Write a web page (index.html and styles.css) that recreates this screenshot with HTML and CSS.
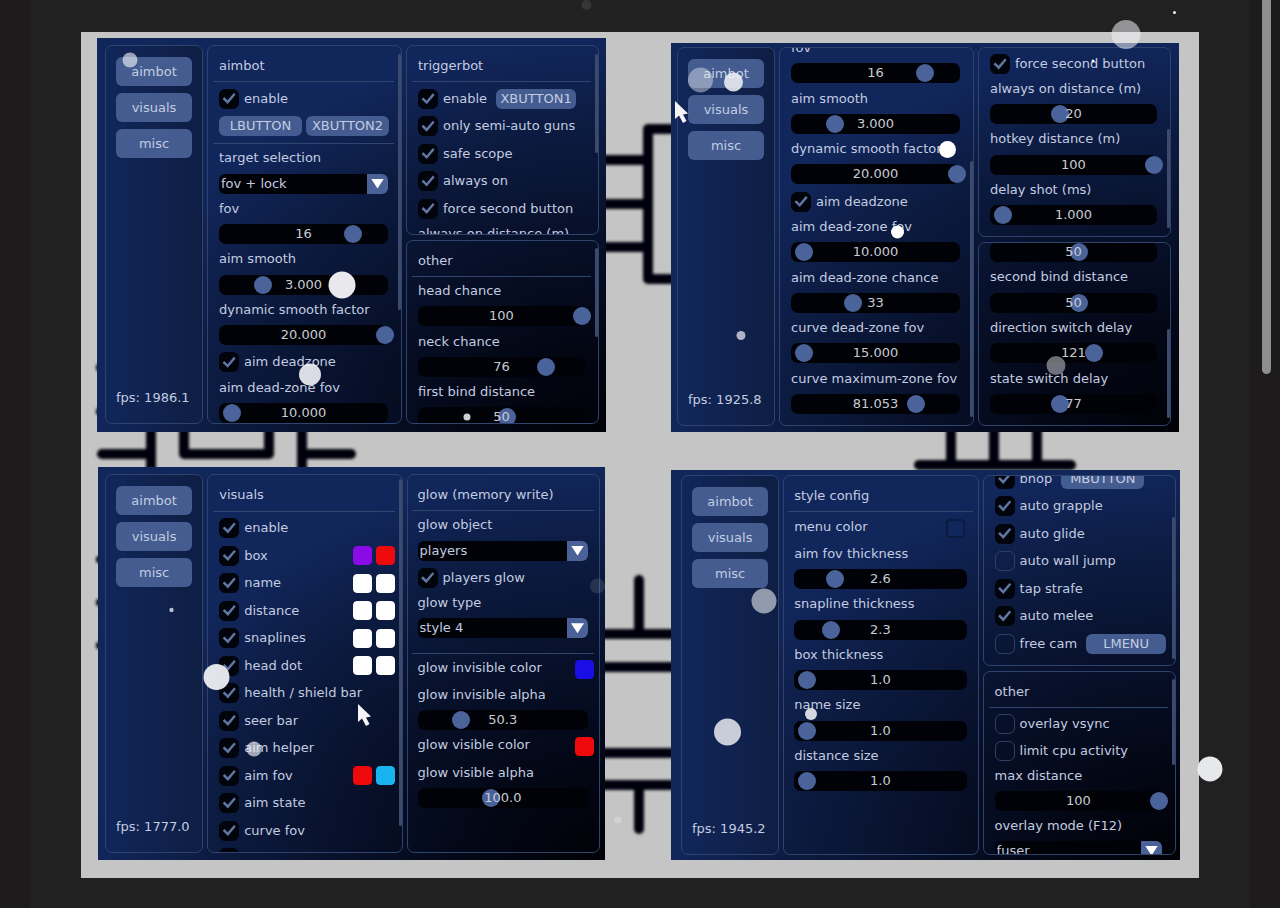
FILE: index.html
```html
<!DOCTYPE html>
<html lang="en">
<head>
<meta charset="utf-8">
<title>Menu gallery</title>
<link rel="stylesheet" href="styles.css">
</head>
<body>
<div class="sheet">
<main class="canvas">
  <svg class="traces" viewBox="81 32 1118 846" preserveAspectRatio="none" aria-hidden="true">
    <defs><filter id="soft" x="-5%" y="-5%" width="110%" height="110%"><feGaussianBlur stdDeviation="1.4"/></filter></defs>
    <g fill="none" stroke="#050507" stroke-width="10" stroke-linecap="round" stroke-linejoin="round" filter="url(#soft)">
      <path d="M600 160H648M600 204H648M600 247H648M680 129H648V279H680"/>
      <path d="M102 454H151M151 425V475M184 425V454H269V425M302 425V475M302 454H351"/>
      <path d="M951 425V465M994 425V465M1037 425V465M919 465H1071"/>
      <path d="M639 580V634M600 634H680M600 667H680M600 753H680M600 785H680M639 785V829"/>
      <path stroke-width="6" d="M99 367V368M99 411V412M99 559V560M99 602V603M99 645V646"/>
    </g>
  </svg>

  <section class="window w1">
    <nav class="panel side">
      <button>aimbot</button><button>visuals</button><button>misc</button>
      <p>fps: 1986.1</p>
    </nav>
    <div class="panel scrolls">
      <div class="stack s-aimbot">
        <h2>aimbot</h2><hr>
        <label class="check"><input type="checkbox" checked>enable</label>
        <div class="keys"><button class="key">LBUTTON</button><button class="key">XBUTTON2</button></div>
        <hr>
        <label class="field"><span>target selection</span><span class="drop"><select><option>fov + lock</option></select></span></label>
        <label class="field"><span>fov</span><span class="slider"><input type="range" value="79"><output>16</output></span></label>
        <label class="field"><span>aim smooth</span><span class="slider"><input type="range" value="20"><output>3.000</output></span></label>
        <label class="field"><span>dynamic smooth factor</span><span class="slider"><input type="range" value="100"><output>20.000</output></span></label>
        <label class="check"><input type="checkbox" checked>aim deadzone</label>
        <label class="field"><span>aim dead-zone fov</span><span class="slider"><input type="range" value="0"><output>10.000</output></span></label>
      </div>
      <i class="bar" style="top:2%;height:68%"></i>
    </div>
    <div class="column">
      <div class="panel scrolls">
        <div class="stack s-trigger">
          <h2>triggerbot</h2><hr>
          <div class="row"><label class="check"><input type="checkbox" checked>enable</label><button class="key">XBUTTON1</button></div>
          <label class="check"><input type="checkbox" checked>only semi-auto guns</label>
          <label class="check"><input type="checkbox" checked>safe scope</label>
          <label class="check"><input type="checkbox" checked>always on</label>
          <label class="check"><input type="checkbox" checked>force second button</label>
          <span>always on distance (m)</span>
        </div>
        <i class="bar" style="top:4%;height:53%"></i>
      </div>
      <div class="panel scrolls">
        <div class="stack s-chance">
          <h2>other</h2><hr>
          <label class="field"><span>head chance</span><span class="slider"><input type="range" value="100"><output>100</output></span></label>
          <label class="field"><span>neck chance</span><span class="slider"><input type="range" value="76"><output>76</output></span></label>
          <label class="field"><span>first bind distance</span><span class="slider"><input type="range" value="50"><output>50</output></span></label>
        </div>
        <i class="bar" style="top:4%;height:49%"></i>
      </div>
    </div>
  </section>

  <section class="window w2">
    <nav class="panel side">
      <button>aimbot</button><button>visuals</button><button>misc</button>
      <p>fps: 1925.8</p>
    </nav>
    <div class="panel scrolls end">
      <div class="stack s-zones">
        <label class="field"><span>fov</span><span class="slider"><input type="range" value="79"><output>16</output></span></label>
        <label class="field"><span>aim smooth</span><span class="slider"><input type="range" value="20"><output>3.000</output></span></label>
        <label class="field"><span>dynamic smooth factor</span><span class="slider"><input type="range" value="100"><output>20.000</output></span></label>
        <label class="check"><input type="checkbox" checked>aim deadzone</label>
        <label class="field"><span>aim dead-zone fov</span><span class="slider"><input type="range" value="0"><output>10.000</output></span></label>
        <label class="field"><span>aim dead-zone chance</span><span class="slider"><input type="range" value="32"><output>33</output></span></label>
        <label class="field"><span>curve dead-zone fov</span><span class="slider"><input type="range" value="0"><output>15.000</output></span></label>
        <label class="field"><span>curve maximum-zone fov</span><span class="slider"><input type="range" value="73"><output>81.053</output></span></label>
      </div>
      <i class="bar" style="top:30%;height:68%"></i>
    </div>
    <div class="column">
      <div class="panel scrolls end">
        <div class="stack s-delay">
          <label class="check"><input type="checkbox" checked>force second button</label>
          <label class="field"><span>always on distance (m)</span><span class="slider"><input type="range" value="38"><output>20</output></span></label>
          <label class="field"><span>hotkey distance (m)</span><span class="slider"><input type="range" value="100"><output>100</output></span></label>
          <label class="field"><span>delay shot (ms)</span><span class="slider"><input type="range" value="0"><output>1.000</output></span></label>
        </div>
        <i class="bar" style="top:43%;height:53%"></i>
      </div>
      <div class="panel scrolls end">
        <div class="stack s-switch">
          <span class="slider"><input type="range" value="50" aria-label="first bind distance"><output>50</output></span>
          <label class="field"><span>second bind distance</span><span class="slider"><input type="range" value="50"><output>50</output></span></label>
          <label class="field"><span>direction switch delay</span><span class="slider"><input type="range" value="60"><output>121</output></span></label>
          <label class="field"><span>state switch delay</span><span class="slider"><input type="range" value="38"><output>77</output></span></label>
        </div>
        <i class="bar" style="top:47%;height:49%"></i>
      </div>
    </div>
  </section>

  <section class="window w3">
    <nav class="panel side">
      <button>aimbot</button><button>visuals</button><button>misc</button>
      <p>fps: 1777.0</p>
    </nav>
    <div class="panel scrolls">
      <div class="stack s-visuals">
        <h2>visuals</h2><hr>
        <label class="check"><input type="checkbox" checked>enable</label>
        <div class="row"><label class="check"><input type="checkbox" checked>box</label><span class="colors"><input type="color" value="#8a0be8" aria-label="box color"><input type="color" value="#ee0a0a" aria-label="box hidden color"></span></div>
        <div class="row"><label class="check"><input type="checkbox" checked>name</label><span class="colors"><input type="color" value="#ffffff" aria-label="name color"><input type="color" value="#ffffff" aria-label="name hidden color"></span></div>
        <div class="row"><label class="check"><input type="checkbox" checked>distance</label><span class="colors"><input type="color" value="#ffffff" aria-label="distance color"><input type="color" value="#ffffff" aria-label="distance hidden color"></span></div>
        <div class="row"><label class="check"><input type="checkbox" checked>snaplines</label><span class="colors"><input type="color" value="#ffffff" aria-label="snaplines color"><input type="color" value="#ffffff" aria-label="snaplines hidden color"></span></div>
        <div class="row"><label class="check"><input type="checkbox" checked>head dot</label><span class="colors"><input type="color" value="#ffffff" aria-label="head dot color"><input type="color" value="#ffffff" aria-label="head dot hidden color"></span></div>
        <label class="check"><input type="checkbox" checked>health / shield bar</label>
        <label class="check"><input type="checkbox" checked>seer bar</label>
        <label class="check"><input type="checkbox" checked>aim helper</label>
        <div class="row"><label class="check"><input type="checkbox" checked>aim fov</label><span class="colors"><input type="color" value="#ee0a0a" aria-label="aim fov color"><input type="color" value="#18b4f0" aria-label="aim fov second color"></span></div>
        <label class="check"><input type="checkbox" checked>aim state</label>
        <label class="check"><input type="checkbox" checked>curve fov</label>
        <span class="check"><input type="checkbox" aria-label="next option" class="filled"></span>
      </div>
      <i class="bar" style="top:1%;height:92%"></i>
    </div>
    <div class="panel">
      <div class="stack s-glow">
        <h2>glow (memory write)</h2><hr>
        <label class="field"><span>glow object</span><span class="drop"><select><option>players</option></select></span></label>
        <label class="check"><input type="checkbox" checked>players glow</label>
        <label class="field"><span>glow type</span><span class="drop"><select><option>style 4</option></select></span></label>
        <i></i><hr>
        <label class="row tint">glow invisible color<span class="colors"><input type="color" value="#1a0ee6"></span></label>
        <label class="field"><span>glow invisible alpha</span><span class="slider"><input type="range" value="20"><output>50.3</output></span></label>
        <label class="row tint">glow visible color<span class="colors"><input type="color" value="#ee0a0a"></span></label>
        <label class="field"><span>glow visible alpha</span><span class="slider"><input type="range" value="39"><output>100.0</output></span></label>
      </div>
    </div>
  </section>

  <section class="window w4">
    <nav class="panel side">
      <button>aimbot</button><button>visuals</button><button>misc</button>
      <p>fps: 1945.2</p>
    </nav>
    <div class="panel">
      <div class="stack s-style">
        <h2>style config</h2><hr>
        <label class="row tint">menu color<span class="colors inset"><input type="color" value="#11265a"></span></label>
        <label class="field"><span>aim fov thickness</span><span class="slider"><input type="range" value="18"><output>2.6</output></span></label>
        <label class="field"><span>snapline thickness</span><span class="slider"><input type="range" value="15"><output>2.3</output></span></label>
        <label class="field"><span>box thickness</span><span class="slider"><input type="range" value="0"><output>1.0</output></span></label>
        <label class="field"><span>name size</span><span class="slider"><input type="range" value="0"><output>1.0</output></span></label>
        <label class="field"><span>distance size</span><span class="slider"><input type="range" value="0"><output>1.0</output></span></label>
      </div>
    </div>
    <div class="column">
      <div class="panel scrolls end">
        <div class="stack s-moves">
          <div class="row"><label class="check"><input type="checkbox" checked>bhop</label><button class="key wide">MBUTTON</button></div>
          <label class="check"><input type="checkbox" checked>auto grapple</label>
          <label class="check"><input type="checkbox" checked>auto glide</label>
          <label class="check"><input type="checkbox">auto wall jump</label>
          <label class="check"><input type="checkbox" checked>tap strafe</label>
          <label class="check"><input type="checkbox" checked>auto melee</label>
          <div class="row"><label class="check"><input type="checkbox">free cam</label><button class="key">LMENU</button></div>
        </div>
        <i class="bar" style="top:22%;height:75%"></i>
      </div>
      <div class="panel scrolls">
        <div class="stack s-overlay">
          <h2>other</h2><hr>
          <label class="check"><input type="checkbox">overlay vsync</label>
          <label class="check"><input type="checkbox">limit cpu activity</label>
          <label class="field"><span>max distance</span><span class="slider"><input type="range" value="100"><output>100</output></span></label>
          <label class="field"><span>overlay mode (F12)</span><span class="drop"><select><option>fuser</option></select></span></label>
        </div>
        <i class="bar" style="top:4%;height:47%"></i>
      </div>
    </div>
  </section>
</main>
</div>
<i class="page-thumb"></i>
<svg class="snow" viewBox="0 0 1280 908" preserveAspectRatio="none" aria-hidden="true">
  <g fill="#f2f3f7">
    <circle cx="130" cy="60" r="7.5" opacity=".62"/>
    <circle cx="342" cy="285" r="13.5" opacity=".96"/>
    <circle cx="310" cy="374.500" r="11" opacity=".9"/>
    <circle cx="467" cy="417" r="3.500" opacity=".85"/>
    <circle cx="741" cy="335.500" r="4.500" opacity=".7"/>
    <circle cx="700.500" cy="80" r="12.500" opacity=".42"/>
    <circle cx="733.500" cy="82" r="9.500" opacity=".85"/>
    <circle cx="947.500" cy="149.500" r="8.500" fill="#fff"/>
    <circle cx="897.500" cy="232" r="6.500" fill="#fff"/>
    <circle cx="1056" cy="365.500" r="9.500" opacity=".45"/>
    <circle cx="1126" cy="34.500" r="14.500" opacity=".55"/>
    <circle cx="1174.500" cy="12.500" r="1.500"/>
    <circle cx="1093" cy="61" r="1.500"/>
    <circle cx="586.500" cy="5" r="5" opacity=".1"/>
    <circle cx="1210" cy="769" r="12.500" opacity=".95"/>
    <circle cx="764" cy="601" r="12.500" opacity=".58"/>
    <circle cx="727.500" cy="732" r="13.500" opacity=".82"/>
    <circle cx="811" cy="714" r="6" opacity=".88"/>
    <circle cx="216.500" cy="677" r="13" opacity=".93"/>
    <circle cx="254" cy="749" r="7.500" opacity=".65"/>
    <circle cx="171.500" cy="610" r="2.200" opacity=".75"/>
    <circle cx="597.500" cy="586" r="7.500" opacity=".12"/>
    <circle cx="618" cy="820" r="3.500" opacity=".3"/>
  </g>
  <path id="ptr" d="M675 101V119L679 115.500L683 123L686.500 121L683 114.500L688 113.500Z" fill="#f4f4f6"/>
  <use href="#ptr" x="-317" y="603"/>
</svg>
</body>
</html>
```

FILE: styles.css
```css
* { box-sizing: border-box; }

body {
  margin: 0;
  padding: 0 30px;
  background: #1d1b1c;
  color: #c3cce0;
  font: 13px/16px "DejaVu Sans", Verdana, sans-serif;
}

button, select, input { font: inherit; color: inherit; margin: 0; }
h2 { margin: 0; font: inherit; }
p { margin: 0; }

.sheet {
  padding: 32px 51px 30px;
  background: #212121;
}

.canvas {
  position: relative;
  display: grid;
  grid-template-columns: 1fr 1fr;
  gap: 35px 65px;
  padding: 6px 19px 18px 16px;
  background: #c5c5c5;
}

.traces {
  position: absolute;
  inset: 0;
  width: 100%;
  height: 100%;
}

.window {
  position: relative;
  display: grid;
  grid-template-columns: 98fr 195fr 193fr;
  grid-template-rows: minmax(0, 1fr);
  gap: 4px;
  background: radial-gradient(ellipse 100% 100% at 100% 100%, #010207 0%, #030715 25%, #071029 50%, #0c1b41 78%, #11265b 100%);
}
.w1 { height: 394px; padding: 7px 7px 8px 8px; }
.w2 { height: 389px; margin: 5px 1px 0 0; padding: 4px 8px 6px 6px; }
.w3 { height: 393px; margin: 0 1px; padding: 7px 5px 7px 7px; }
.w4 { height: 390px; margin-top: 3px; padding: 5px 4px 5px 10px; }

.column {
  display: grid;
  grid-template-rows: minmax(0, 190fr) minmax(0, 184fr);
  gap: 5px;
  min-width: 0;
}

.panel {
  position: relative;
  display: flex;
  flex-direction: column;
  min-width: 0;
  min-height: 0;
  padding: 12px 11px 10px 10px;
  overflow: hidden;
  border: 1px solid #30436d;
  border-radius: 7px;
}
.panel.scrolls { padding-right: 13px; padding-left: 11px; }
.panel.end { justify-content: flex-end; padding-bottom: 11px; }

.side {
  gap: 7px;
  padding: 11px 10px 17px;
  background: linear-gradient(to right, #11265a, #0e1e43);
}
.side button {
  height: 29px;
  padding: 0;
  border: 0;
  border-radius: 6px;
  background: #445c90;
}
.side p { margin-top: auto; white-space: nowrap; }

.stack {
  display: flex;
  flex: none;
  flex-direction: column;
  justify-content: space-between;
  white-space: nowrap;
}
.s-aimbot { height: 365px; }
.s-trigger { height: 184px; }
.s-chance { height: 174px; }
.s-zones { height: 374px; }
.s-delay { height: 171px; }
.s-switch { height: 172px; }
.s-visuals { height: 381px; }
.s-glow { height: 321px; }
.s-style { height: 303px; }
.s-moves { height: 185px; }
.s-overlay { height: 177px; }

hr {
  width: auto;
  height: 1px;
  margin: 0 -6px -1px;
  border: 0;
  background: #31456f;
}

.field { display: contents; }

.row, .check {
  display: flex;
  align-items: center;
  height: 20px;
}
.row { gap: 9px; }
.row.tint { align-items: flex-start; }
.check { gap: 5px; }

.check input {
  width: 20px;
  height: 20px;
  border: 1px solid #2f3f64;
  border-radius: 6px;
  appearance: none;
}
.check input:checked, .check .filled { border-color: #02040c; background: #02040c; }
.check input:checked::before {
  content: "";
  display: block;
  height: 100%;
  background: #6076a3;
  clip-path: polygon(14% 52%, 24% 42%, 42% 60%, 77% 19%, 87% 28%, 43% 80%);
}

.keys { display: flex; gap: 4px; }
.key {
  flex: none;
  width: 80px;
  height: 20px;
  padding: 0;
  border: 0;
  border-radius: 6px;
  background: #445c90;
}
.key.wide, .keys .key { width: 83px; }

.slider {
  position: relative;
  display: grid;
  height: 20px;
  border-radius: 7px;
  background: #010207;
  place-items: center;
}
.slider input {
  position: absolute;
  inset: 0 -6px 0 4px;
  width: auto;
  height: 20px;
  background: none;
  appearance: none;
}
.slider input::-webkit-slider-thumb {
  width: 18px;
  height: 18px;
  border: 0;
  border-radius: 50%;
  background: #4a649b;
  appearance: none;
}
.slider output { position: relative; pointer-events: none; color: #c9cbd2; }

.drop {
  position: relative;
  display: block;
  height: 20px;
  overflow: hidden;
  border-radius: 6px;
  background: #010207;
}
.drop select {
  width: 100%;
  height: 20px;
  padding: 0 24px 0 2px;
  border: 0;
  background: none;
  appearance: none;
}
.drop::before {
  content: "";
  position: absolute;
  inset: 0 0 0 auto;
  width: 21px;
  background: #4a6298;
}
.drop::after {
  content: "";
  position: absolute;
  top: 5px;
  right: 4px;
  width: 13px;
  height: 10px;
  background: #fff;
  clip-path: polygon(0 0, 100% 0, 50% 100%);
}

.colors { display: flex; gap: 4px; margin: 0 -6px 0 auto; }
.colors input {
  width: 19px;
  height: 19px;
  padding: 0;
  border: 0;
  border-radius: 4px;
  background: none;
  appearance: none;
}
.colors input::-webkit-color-swatch-wrapper { padding: 0; }
.colors input::-webkit-color-swatch { border: 0; border-radius: 4px; }
.colors.inset { margin-right: 2px; }
.inset input::-webkit-color-swatch { border: 2px solid #0c1a40; }

.bar {
  position: absolute;
  right: 0;
  width: 3px;
  border-radius: 2px;
  background: #3c4b6d;
}

.page-thumb {
  position: absolute;
  top: 0;
  right: 9px;
  width: 9px;
  height: 374px;
  border-radius: 0 0 5px 5px;
  background: #8e8e90;
}

.snow {
  position: absolute;
  top: 0;
  left: 0;
  width: 100%;
  height: 908px;
  pointer-events: none;
}
```
